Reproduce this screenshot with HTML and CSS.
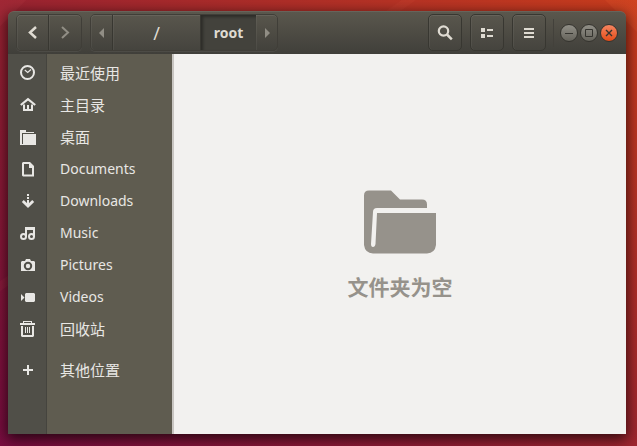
FILE: index.html
```html
<!DOCTYPE html>
<html lang="zh-CN">
<head>
<meta charset="utf-8">
<title>root</title>
<link rel="stylesheet" href="styles.css">
</head>
<body>
<div class="window">
  <header class="header">
    <div class="group nav">
      <button class="btn" aria-label="后退"><svg width="16" height="16" viewBox="0 0 16 16"><path class="line" d="M11 2 5 7.500l6 5.500" stroke-width="2.500"/></svg></button>
      <button class="btn" disabled aria-label="前进"><svg width="16" height="16" viewBox="0 0 16 16"><path class="line" d="M5 2 11 7.500l-6 5.500" stroke-width="2"/></svg></button>
    </div>
    <nav class="group path" aria-label="路径">
      <button class="btn arrow" disabled aria-label="向左滚动"><svg width="6" height="10" viewBox="0 0 6 10"><path d="M5 0v10L0 5z"/></svg></button>
      <button class="btn crumb">/</button>
      <button class="btn current" aria-current="page">root</button>
      <button class="btn arrow" disabled aria-label="向右滚动"><svg width="6" height="10" viewBox="0 0 6 10"><path d="M1 0v10l5-5z"/></svg></button>
    </nav>
    <div class="tools">
      <button class="btn tool" aria-label="搜索"><svg width="16" height="16" viewBox="0 0 16 16"><circle class="line" cx="6.500" cy="6" r="4.700" stroke-width="2.200"/><path class="line" d="m10 9.500 4.800 4.800" stroke-width="2.500"/></svg></button>
      <button class="btn tool" aria-label="列表视图"><svg width="16" height="16" viewBox="0 0 16 16"><path d="M2 3h4v4H2zM2 9h4v4H2zM8 4h6v2H8zM8 10h6v2H8z"/></svg></button>
      <button class="btn tool" aria-label="菜单"><svg width="16" height="16" viewBox="0 0 16 16"><path d="M3 3h10v2H3zM3 7h10v2H3zM3 11h10v2H3z"/></svg></button>
    </div>
    <div class="controls">
      <button class="ctl" aria-label="最小化"><svg width="16" height="16" viewBox="0 0 16 16"><path d="M4 8.500h8"/></svg></button>
      <button class="ctl" aria-label="最大化"><svg width="16" height="16" viewBox="0 0 16 16"><path d="M4.500 4.500h7v7h-7z"/></svg></button>
      <button class="ctl close" aria-label="关闭"><svg width="16" height="16" viewBox="0 0 16 16"><path d="m5 5 6 6M11 5l-6 6" stroke-width="1.400"/></svg></button>
    </div>
  </header>
  <div class="content">
    <nav class="sidebar" aria-label="位置">
      <a class="place" href="#recent"><span class="icon"><svg width="16" height="16" viewBox="0 0 16 16"><circle class="line" cx="7.500" cy="7.500" r="6.500" stroke-width="2"/><path class="line" d="m4.800 5 2.900 2.500L11 4.500" stroke-width="1.200"/></svg></span><span class="name">最近使用</span></a>
      <a class="place" href="#home"><span class="icon"><svg width="16" height="16" viewBox="0 0 16 16"><path class="line" d="M.8 8 8 2.200 15.200 8" stroke-width="2.200"/><path d="M3 7.500h2V12h2V8h2v4h2V7.500h2V14H3z"/></svg></span><span class="name">主目录</span></a>
      <a class="place" href="#desktop"><span class="icon"><svg width="16" height="16" viewBox="0 0 16 16"><path d="M0 1h6v2h8v1H2v11h1v1H0zM3 5h13v11H2.500V15H3z"/></svg></span><span class="name">桌面</span></a>
      <a class="place" href="#documents"><span class="icon"><svg width="16" height="16" viewBox="0 0 16 16"><path fill-rule="evenodd" d="M3 1h7l4 4v10.500H3L2 14.500V2zM4 3v10.500h8V7H9V3z"/></svg></span><span class="name" lang="en">Documents</span></a>
      <a class="place" href="#downloads"><span class="icon"><svg width="16" height="16" viewBox="0 0 16 16"><path d="M7 1h2v2H7zM7 4h2v2H7zM7 7h2v5H7z"/><path class="line" d="M2.800 8 8 13l5.200-5" stroke-width="2.800"/></svg></span><span class="name" lang="en">Downloads</span></a>
      <a class="place" href="#music"><span class="icon"><svg width="16" height="16" viewBox="0 0 16 16"><path d="M5 2h10v10h-2V5H7v7H5z"/><circle class="line" cx="3.500" cy="11.500" r="2.500" stroke-width="2"/><circle class="line" cx="11.500" cy="11.500" r="2.500" stroke-width="2"/></svg></span><span class="name" lang="en">Music</span></a>
      <a class="place" href="#pictures"><span class="icon"><svg width="16" height="16" viewBox="0 0 16 16"><path fill-rule="evenodd" d="M5 4 6 2h4l1 2h3l1 1v9H1V5l1-1zM8 4.800a4.200 4.200 0 1 0 0 8.400 4.200 4.200 0 0 0 0-8.400z"/><circle cx="8" cy="9" r="2.200"/></svg></span><span class="name" lang="en">Pictures</span></a>
      <a class="place" href="#videos"><span class="icon"><svg width="16" height="16" viewBox="0 0 16 16"><path d="M6 4h8l1 1v7l-1 1H6l-1-1V5zM1 5l3.500 3.500L1 12z"/></svg></span><span class="name" lang="en">Videos</span></a>
      <a class="place" href="#trash"><span class="icon"><svg width="16" height="16" viewBox="0 0 16 16"><path fill-rule="evenodd" d="M3 0h9v2h3v2H0V2h3zM4 1v1h7V1zM1 5h2v9h9V5h2v10l-1 1H2l-1-1zM5 6h1v6H5zM7 6h1v6H7zM9 6h1v6H9z"/></svg></span><span class="name">回收站</span></a>
      <a class="place other" href="#other"><span class="icon"><svg width="16" height="16" viewBox="0 0 16 16"><path d="M7 3h2v4h4v2H9v4H7V9H3V7h4z"/></svg></span><span class="name">其他位置</span></a>
    </nav>
    <main class="empty">
      <svg width="72" height="64" viewBox="0 0 72 64"><path d="M5 .5h22L36 9.500h22q5 0 5 5V18H13q-4 0-4 4L7 54q0 3 2 3t2.500-3L13 23h59v32q-1 8-9 8.500H9Q1 63 0 55V5.500q0-5 5-5z"/></svg>
      <p class="message">文件夹为空</p>
    </main>
  </div>
</div>
</body>
</html>
```
FILE: styles.css
```css
* {
  box-sizing: border-box;
}

body {
  display: flex;
  min-height: 100vh;
  margin: 0;
  padding: 11px 11px 12px 8px;
  font: 14px/20px "Noto Sans", "Noto Sans CJK SC", sans-serif;
  background:
    linear-gradient(135deg, rgba(255, 120, 120, .06) 18px, transparent 19px),
    linear-gradient(145deg, transparent 230px, rgba(255, 120, 90, .06) 231px 238px, transparent 239px),
    linear-gradient(225deg, rgba(255, 120, 60, .12) 22px, transparent 23px),
    linear-gradient(38deg, #780d40 0%, #9c2430 50%, #c83c1d 100%);
}

.window {
  display: flex;
  flex: 1;
  flex-direction: column;
  border-radius: 6px 6px 0 0;
  box-shadow: 0 4px 14px 1px rgba(0, 0, 0, .7);
}

.header {
  display: flex;
  align-items: center;
  height: 43px;
  padding: 0 8px 1px;
  border-top: 1px solid #67645b;
  border-radius: 6px 6px 0 0;
  background: linear-gradient(#5a574d, #403f3a);
}

button {
  display: flex;
  align-items: center;
  justify-content: center;
  margin: 0;
  padding: 0;
  border: 0;
  font: inherit;
  color: #dfdbd2;
  background: none;
}

svg {
  display: block;
  fill: currentColor;
}

.line {
  fill: none;
  stroke: currentColor;
}

.group {
  display: flex;
  height: 37px;
  border: 1px solid #403e38;
  border-radius: 5px;
  box-shadow: 0 1px rgba(255, 255, 255, .06);
}

.path {
  margin-left: 8px;
}

.btn {
  background: linear-gradient(#59564d, #45443e);
  box-shadow: inset 0 1px rgba(255, 255, 255, .08), inset 1px 0 rgba(255, 255, 255, .05);
}

.btn:disabled {
  color: #918e85;
  background: none;
}

.group .btn:first-child {
  border-radius: 4px 0 0 4px;
}

.group .btn:last-child {
  border-radius: 0 4px 4px 0;
}

.nav .btn {
  width: 32px;
}

.nav .btn:first-child {
  border-right: 1px solid #383731;
}

.arrow {
  width: 21px;
}

.crumb {
  width: 89px;
  border: solid #383731;
  border-width: 0 1px;
  font-size: 18px;
}

.current {
  width: 55px;
  font-weight: 700;
  background: #43423c;
  box-shadow: inset 2px 2px 3px rgba(0, 0, 0, .35);
}

.tools {
  display: flex;
  gap: 8px;
  margin-left: auto;
  padding-right: 7px;
}

.tool {
  width: 34px;
  height: 37px;
  border: 1px solid #383731;
  border-radius: 5px;
}

.controls {
  display: flex;
  gap: 2px;
  align-items: center;
  height: 28px;
  padding-left: 6px;
  border-left: 1px solid #43413b;
}

.ctl {
  width: 18px;
  height: 18px;
  border: 1px solid #35342f;
  border-radius: 50%;
  color: #35342f;
  background: linear-gradient(#918f87, #65635b);
}

.ctl svg {
  fill: none;
  stroke: currentColor;
}

.close {
  background: linear-gradient(#f58560, #e54c18);
}

.content {
  display: flex;
  flex: 1;
}

.sidebar {
  width: 166px;
  padding: 3px 0;
  border-right: 2px solid #c8c5c1;
  color: #e8e7e4;
  background: linear-gradient(90deg, #504f48 38px, #45443e 38px 39px, #5f5c50 39px);
}

.place {
  display: flex;
  align-items: center;
  height: 32px;
  color: inherit;
  text-decoration: none;
}

.icon {
  padding: 0 16px 0 12px;
}

.name {
  padding-left: 8px;
}

.name:lang(zh) {
  font-size: 15px;
}

.other {
  margin-top: 9px;
}

.empty {
  display: flex;
  flex: 1;
  flex-direction: column;
  align-items: center;
  justify-content: center;
  gap: 18px;
  padding-top: 4px;
  color: #96928b;
  background: #f2f1ef;
}

.message {
  margin: 0;
  font-size: 21px;
  line-height: 30px;
  font-weight: 700;
}
```
